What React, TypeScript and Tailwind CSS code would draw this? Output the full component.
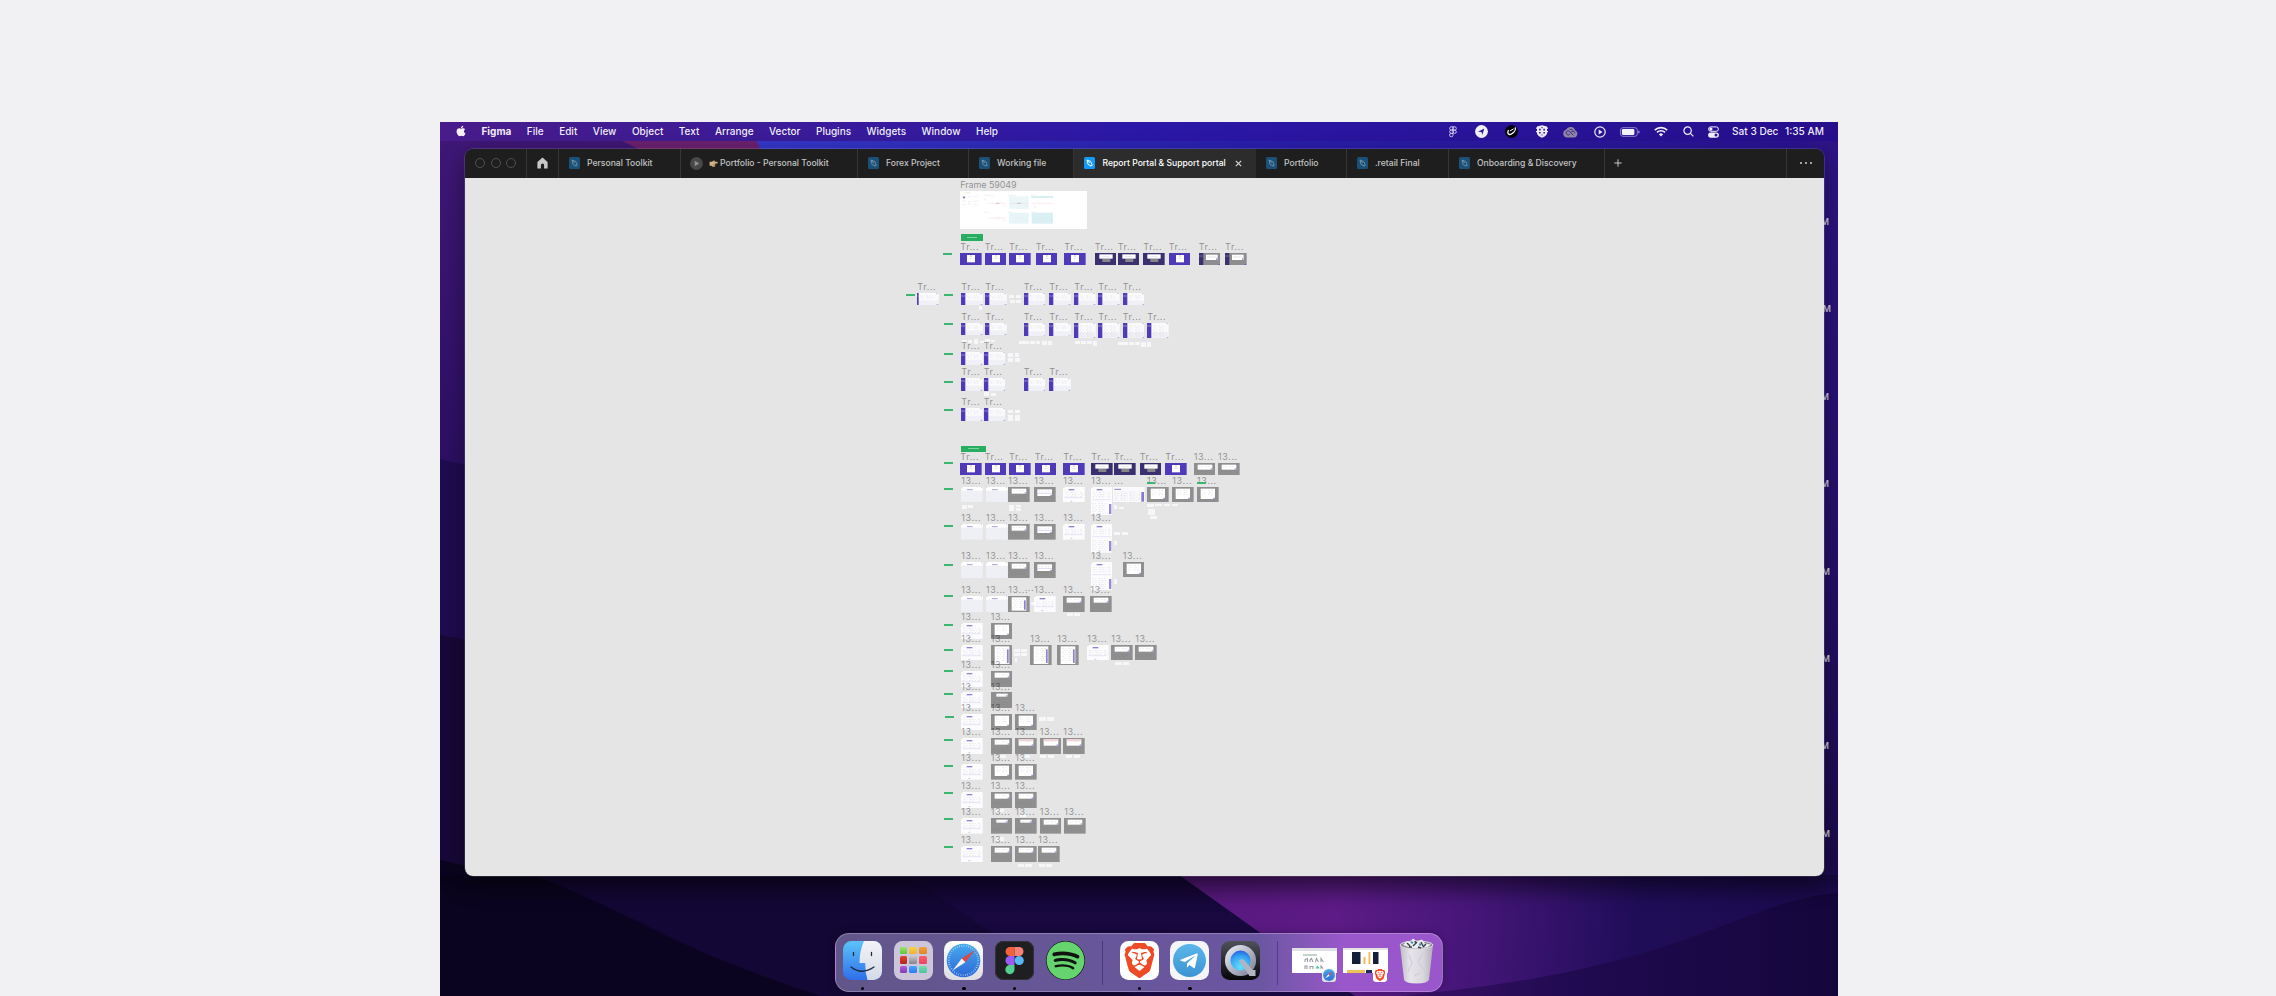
import React from "react";
import { FaApple, FaSpotify, FaTelegramPlane } from "react-icons/fa";
import { SiBrave } from "react-icons/si";

/* ---------- Wallpaper ---------- */

function Wallpaper() {
  return (
    <svg className="absolute inset-0" width="1398" height="874" viewBox="0 0 1398 874">
      <defs>
        <linearGradient id="wpBase" x1="0" y1="0" x2="0" y2="1">
          <stop offset="0" stopColor="#401878" />
          <stop offset=".3" stopColor="#32116a" />
          <stop offset=".55" stopColor="#230c58" />
          <stop offset="1" stopColor="#12062f" />
        </linearGradient>
        <linearGradient id="wpTop" x1="0" y1="0" x2="1" y2="0">
          <stop offset="0" stopColor="#3538cc" />
          <stop offset=".45" stopColor="#2a1fb0" />
          <stop offset="1" stopColor="#2a1290" />
        </linearGradient>
        <linearGradient id="wpRight" x1="0" y1="0" x2="0" y2="1">
          <stop offset="0" stopColor="#2e1488" />
          <stop offset=".5" stopColor="#25106a" />
          <stop offset=".85" stopColor="#1d0b4c" />
          <stop offset="1" stopColor="#1b0a55" />
        </linearGradient>
        <linearGradient id="wpPurple" gradientUnits="userSpaceOnUse" x1="735" y1="0" x2="1398" y2="60">
          <stop offset="0" stopColor="#541779" />
          <stop offset=".35" stopColor="#5c1b86" />
          <stop offset=".52" stopColor="#4a177c" />
          <stop offset=".66" stopColor="#35126b" />
          <stop offset=".8" stopColor="#1f0d58" />
          <stop offset="1" stopColor="#1c0b50" />
        </linearGradient>
        <linearGradient id="wpMid" x1="0" y1="0" x2="0" y2="1">
          <stop offset="0" stopColor="#150739" />
          <stop offset="1" stopColor="#1b0a47" />
        </linearGradient>
        <linearGradient id="wpCorner" gradientUnits="userSpaceOnUse" x1="960" y1="0" x2="1398" y2="0">
          <stop offset="0" stopColor="#3a1168" />
          <stop offset=".4" stopColor="#200a50" />
          <stop offset="1" stopColor="#14063c" />
        </linearGradient>
        <linearGradient id="wpShade" x1="0" y1="0" x2="0" y2="1">
          <stop offset="0" stopColor="#000" stopOpacity=".25" />
          <stop offset="1" stopColor="#000" stopOpacity="0" />
        </linearGradient>
      </defs>
      <rect width="1398" height="874" fill="url(#wpBase)" />
      <path d="M0 337 L60 352 V874 H0Z" fill="#1f0b50" />
      <path d="M0 513 L60 524 V874 H0Z" fill="#170838" />
      <path d="M180 18 L205 30 H335 L318 18Z" fill="#6c2170" />
      <path d="M316 18 L336 60 H1398 V18Z" fill="url(#wpTop)" />
      <path d="M1370 18 H1398 V874 H1370Z" fill="url(#wpRight)" />
      <path d="M0 738 L60 752 H1370 V874 H0Z" fill="#0b0420" />
      <path d="M85 750 Q150 775 215 808 T380 874 H800 V750Z" fill="#130735" />
      <path d="M470 754 L535 800 Q610 850 700 874 H1398 V750H465Z" fill="url(#wpMid)" />
      <path d="M735 750 L819 810 L915 874 H1398 V750Z" fill="url(#wpPurple)" />
      <path d="M1398 771 C1350 775 1310 794 1260 812 C1160 850 1060 864 960 874 H1398Z" fill="url(#wpCorner)" />
      <rect y="753" width="1398" height="30" fill="url(#wpShade)" />
    </svg>
  );
}

/* ---------- Menu bar ---------- */

const menus = ["File", "Edit", "View", "Object", "Text", "Arrange", "Vector", "Plugins", "Widgets", "Window", "Help"];

function MenuBar() {
  return (
    <div className="relative flex h-[19px] items-center bg-gradient-to-r from-[#491b8b] via-[#2b18a8] to-[#270f8c] pl-[14.5px] pr-[14px] text-[10.1px] leading-none text-white/95">
      <FaApple className="mb-[1px] size-[12px]" />
      <div className="-mt-px ml-[15px] flex items-center gap-[15.500px] text-[10px] font-medium">
        <span className="font-bold">Figma</span>
        {menus.map((m) => (
          <span key={m}>{m}</span>
        ))}
      </div>
      <div className="ml-auto flex items-center">
        <svg className="mr-[18px]" width="8" height="12" viewBox="0 0 8 12" fill="none" stroke="#d9d2f2" strokeWidth=".9">
          <path d="M4 .8H2.300a1.600 1.600 0 0 0 0 3.300H4zM4 .8h1.700a1.600 1.600 0 0 1 0 3.300H4zM4 4.100H2.300a1.600 1.600 0 0 0 0 3.300H4zM4 7.400H2.300A1.700 1.700 0 1 0 4 9.200z" />
          <circle cx="5.700" cy="5.800" r="1.600" />
        </svg>
        <svg className="mr-[17px]" width="13" height="13" viewBox="0 0 13 13">
          <circle cx="6.500" cy="6.500" r="6.400" fill="#f3f1fb" />
          <path d="M3 6.800 9.300 3.500 7.300 10 6.500 7.100Z" fill="#2a1a96" />
        </svg>
        <svg className="mr-[18px]" width="13" height="13" viewBox="0 0 13 13">
          <circle cx="6.500" cy="6.500" r="6.400" fill="#050308" />
          <path d="M3.300 5.500C1.800 9 4 10.300 6.600 8.900 9.200 7.400 10.800 4.600 10.300 2.900" stroke="#fff" strokeWidth="1.300" fill="none" strokeLinecap="round" />
          <path d="M5.200 5.800 8.300 4" stroke="#fff" strokeWidth="1" strokeLinecap="round" />
        </svg>
        <svg className="mr-[15px]" width="12" height="13" viewBox="0 0 12 13">
          <path d="M1 1.500 6 .2 11 1.500V8.500Q10 11.500 6 12.800 2 11.500 1 8.500Z" fill="#eeebfa" />
          <path d="M0 2.500h1v1.200H0zM11 2.500h1v1.200h-1zM0 6h1v1.200H0zM11 6h1v1.200h-1z" fill="#eeebfa" />
          <path d="M3 3.800h1.700v1.600H3zM7.300 3.800H9v1.600H7.300zM3 7h1.700v1.600H3zM7.300 7H9v1.600H7.300zM5.400 2h1.200v1.200H5.400zM5.400 9.400h1.200v1.200H5.400z" fill="#3a2a9c" />
        </svg>
        <svg className="mr-[16px]" width="15" height="12" viewBox="0 0 15 12">
          <path d="M4 11.500A4 4 0 0 1 3 3.700 5 5 0 0 1 12.300 4.500a3.700 3.700 0 0 1-1.300 7Z" fill="#9288a6" />
          <path d="M10.500 9.400 6.300 5.300a1.900 1.900 0 1 0-2.500 3c1 .9 2.300.7 3.200-.3M6.500 3.500q2.600-1.200 4 1.500M8 6.200c1.500-1.500 4-.6 4 1.100" stroke="#35228e" strokeWidth=".9" fill="none" />
        </svg>
        <svg className="mr-[14px]" width="12" height="12" viewBox="0 0 12 12">
          <circle cx="6" cy="6" r="5.200" fill="none" stroke="#f1eefb" strokeWidth="1.200" />
          <path d="M4.700 3.600v4.800L8.500 6Z" fill="#f1eefb" />
        </svg>
        <svg className="mr-[14px]" width="20" height="10" viewBox="0 0 20 10">
          <rect x=".5" y=".7" width="16.800" height="8.600" rx="2.400" fill="none" stroke="#8d82cd" />
          <rect x="1.900" y="2.100" width="12.500" height="5.800" rx="1.200" fill="#f4f2fc" />
          <path d="M18.300 3.400q1.400.4 1.400 1.600t-1.400 1.600Z" fill="#a79ddb" />
        </svg>
        <svg className="mr-[15px]" width="14" height="11" viewBox="0 0 14 11" fill="none" stroke="#f4f2fc" strokeWidth="1.600">
          <path d="M.8 4.100a8.900 8.900 0 0 1 12.400 0M3 6.400a5.700 5.700 0 0 1 8 0" />
          <path d="M7 10.600 4.900 8.400a3 3 0 0 1 4.200 0Z" fill="#f4f2fc" stroke="none" />
        </svg>
        <svg className="mr-[14px]" width="11" height="11" viewBox="0 0 11 11" fill="none" stroke="#f4f2fc" strokeWidth="1.200">
          <circle cx="4.600" cy="4.600" r="3.700" />
          <path d="m7.400 7.400 3 3" />
        </svg>
        <svg className="mr-[13px]" width="11" height="12" viewBox="0 0 11 12">
          <rect x=".6" y=".9" width="9.800" height="4.400" rx="2.200" fill="none" stroke="#f4f2fc" />
          <circle cx="2.900" cy="3.100" r="1.600" fill="#f4f2fc" />
          <rect x=".1" y="6.500" width="10.800" height="5.200" rx="2.600" fill="#f4f2fc" />
          <circle cx="8" cy="9.100" r="1.500" fill="#2a1590" />
        </svg>
        <span className="-mt-px w-[53px] whitespace-nowrap font-medium">Sat 3 Dec</span>
        <span className="-mt-px w-[39px] whitespace-nowrap font-medium">1:35 AM</span>
      </div>
    </div>
  );
}

/* ---------- Tab bar ---------- */

function FileIcon({ active = false }: { active?: boolean }) {
  return (
    <svg className="shrink-0" width="11" height="12" viewBox="0 0 11 12">
      <rect width="11" height="12" rx="1.500" fill={active ? "#1398fb" : "#1b5078"} />
      <g fill="none" stroke={active ? "#fff" : "#6f93ab"} strokeWidth=".9">
        <path d="M3 3l1 4.500 3 1.300L8 7.800 6.800 4.500Z" />
        <path d="M3 3l2.700 3M7 9.500l1.700-1.700" />
      </g>
    </svg>
  );
}

function PlayIcon() {
  return (
    <svg className="shrink-0" width="13" height="13" viewBox="0 0 13 13">
      <circle cx="6.500" cy="6.500" r="6.400" fill="#484848" />
      <path d="M4.700 3.800v5.400L9.300 6.500Z" fill="#909090" />
    </svg>
  );
}

function PointingHand() {
  return (
    <svg className="shrink-0" width="9" height="7" viewBox="0 0 10 8">
      <path d="M9.800 3Q10 2 8.800 2H6L6.500.9Q6.400.2 5.500.6L3 2H.5v4.500h2L4 7.700h2.200Q7 7.300 6.700 6.600 7.300 6 6.900 5.400 7.400 4.800 7 4h2Q9.700 4 9.800 3Z" fill="#d3b083" />
      <path d="M6.700 5.300H4.300M6.500 6.500h-2" stroke="#7d6248" strokeWidth=".5" />
    </svg>
  );
}

function Tab({ label, width }: { label: string; width: string }) {
  return (
    <div className={`flex h-full shrink-0 items-center gap-[7px] border-r border-[#363636] pl-[10px] text-[#c4c4c4] ${width}`}>
      <FileIcon />
      <span className="whitespace-nowrap">{label}</span>
    </div>
  );
}

function TabBar() {
  return (
    <div className="flex h-[29.500px] shrink-0 items-center bg-[#1e1e1e] text-[8.600px] font-medium leading-none">
      <div className="flex h-full w-[62px] shrink-0 items-center gap-[5.500px] border-r border-[#363636] pl-[10px]">
        <span className="size-[10px] rounded-full border border-[#505050]" />
        <span className="size-[10px] rounded-full border border-[#505050]" />
        <span className="size-[10px] rounded-full border border-[#505050]" />
      </div>
      <div className="flex h-full w-[32px] shrink-0 items-center justify-center border-r border-[#363636]">
        <svg width="11" height="12" viewBox="0 0 11 12">
          <path d="M5.500.6 10.600 5v6.400H7.100V8.200a1.600 1.600 0 0 0-3.200 0v3.200H.4V5Z" fill="#c8c8c8" />
        </svg>
      </div>
      <Tab label="Personal Toolkit" width="w-[122px]" />
      <div className="flex h-full w-[177px] shrink-0 items-center border-r border-[#363636] pl-[9px] text-[#c4c4c4]">
        <PlayIcon />
        <span className="ml-[6px] flex items-center gap-[2px]">
          <PointingHand />
          <span className="whitespace-nowrap">Portfolio - Personal Toolkit</span>
        </span>
      </div>
      <Tab label="Forex Project" width="w-[111px]" />
      <Tab label="Working file" width="w-[105px]" />
      <div className="flex h-full w-[182px] shrink-0 items-center gap-[7.500px] bg-[#2c2c2c] pl-[10px] text-white">
        <FileIcon active />
        <span className="whitespace-nowrap">Report Portal &amp; Support portal</span>
        <svg className="ml-[2px]" width="7" height="7" viewBox="0 0 7 7" stroke="#d8d8d8" strokeWidth="1.100">
          <path d="M.8.8l5.400 5.400M6.200.8.800 6.200" />
        </svg>
      </div>
      <Tab label="Portfolio" width="w-[91px]" />
      <Tab label=".retail Final" width="w-[102px]" />
      <Tab label="Onboarding & Discovery" width="w-[156px]" />
      <svg className="ml-[9px]" width="8" height="8" viewBox="0 0 8 8" stroke="#c8c8c8" strokeWidth="1">
        <path d="M4 .3v7.400M.3 4h7.400" />
      </svg>
      <div className="ml-auto flex h-full w-[38px] items-center justify-center gap-[3px] border-l border-[#363636]">
        <span className="size-[2px] rounded-full bg-[#d0d0d0]" />
        <span className="size-[2px] rounded-full bg-[#d0d0d0]" />
        <span className="size-[2px] rounded-full bg-[#d0d0d0]" />
      </div>
    </div>
  );
}

/* ---------- Canvas ---------- */

type Kind =
  | "login" | "dark" | "side" | "app" | "thin" | "blank" | "page" | "tall"
  | "table" | "top" | "lined" | "small" | "pink" | "big" | "grid";

type Item = [kind: Kind, x: number, w?: number, h?: number];
type Row = { y: number; h: number; prefix: string; items: Item[] };
type Box = [x: number, y: number, w: number, h: number];
type Section = { y: number; rows: Row[]; markers: Box[]; chips: Box[] };

// Canvas units are a third of a screen pixel at this zoom level.
const ZOOM = 1 / 3;
const ORIGIN_X = 1306;

const sections: Section[] = [
  {
    y: -9,
    rows: [
      { y: 234, h: 37, prefix: "Tr...", items: [["login", 180], ["login", 253], ["login", 326], ["login", 406], ["login", 492], ["dark", 583], ["dark", 652], ["dark", 729], ["login", 805], ["side", 895], ["side", 974]] },
      { y: 354, h: 37, prefix: "Tr...", items: [["thin", 51], ["app", 183], ["app", 255], ["app", 370], ["app", 447], ["app", 522], ["app", 594], ["app", 667]] },
      { y: 443, h: 37, prefix: "Tr...", items: [["app", 183], ["app", 255], ["app", 370, 65, 41], ["app", 447, 65, 41], ["app", 522, 65, 46], ["app", 594, 65, 46], ["app", 667, 65, 46], ["app", 741, 65, 46]] },
      { y: 531, h: 39, prefix: "Tr...", items: [["app", 183], ["app", 250]] },
      { y: 609, h: 39, prefix: "Tr...", items: [["app", 183], ["app", 250], ["app", 370], ["app", 447]] },
      { y: 699, h: 39, prefix: "Tr...", items: [["app", 183], ["app", 250]] },
    ],
    markers: [[127, 234, 27, 6], [17, 357, 27, 6], [132, 357, 27, 6], [132, 444, 27, 6], [132, 533, 27, 6], [132, 617, 27, 6], [132, 702, 27, 6]],
    chips: [
      [327, 360, 15, 9], [346, 360, 15, 9], [329, 375, 14, 9], [348, 375, 13, 10], [237, 394, 9, 11],
      [185, 494, 14, 10], [202, 496, 14, 9], [220, 493, 14, 15], [238, 497, 14, 8], [254, 493, 14, 10], [271, 494, 14, 8],
      [355, 497, 15, 9], [372, 499, 15, 8], [390, 497, 14, 9], [407, 499, 13, 8], [424, 497, 15, 13], [442, 499, 14, 11],
      [525, 497, 15, 9], [542, 499, 14, 8], [560, 498, 14, 8], [578, 498, 13, 14],
      [652, 500, 15, 10], [669, 502, 15, 8], [686, 502, 15, 8], [703, 500, 15, 9], [722, 502, 14, 13], [739, 502, 13, 13],
      [324, 534, 15, 12], [343, 534, 14, 11], [323, 550, 16, 11], [343, 550, 15, 10], [252, 652, 15, 10], [271, 653, 15, 9],
      [324, 705, 14, 9], [344, 705, 14, 9], [322, 719, 17, 20], [344, 719, 14, 20],
    ],
  },
  {
    y: 756,
    rows: [
      { y: 98, h: 37, prefix: "Tr...", items: [["login", 180], ["login", 253], ["login", 326], ["login", 403], ["login", 489], ["dark", 573], ["dark", 641], ["dark", 718], ["login", 795]] },
      { y: 98, h: 37, prefix: "13...", items: [["top", 880], ["top", 953]] },
      { y: 170, h: 47, prefix: "13...", items: [["blank", 183], ["blank", 257], ["top", 324], ["lined", 402], ["page", 489], ["tall", 573, 63, 86], ["big", 740], ["big", 816], ["big", 890]] },
      { y: 282, h: 47, prefix: "13...", items: [["blank", 183], ["blank", 257], ["top", 324], ["lined", 402], ["page", 489], ["tall", 573, 63, 86]] },
      { y: 396, h: 48, prefix: "13...", items: [["blank", 183], ["blank", 257], ["top", 324], ["lined", 402], ["tall", 573, 63, 84], ["big", 667, 65, 45]] },
      { y: 497, h: 48, prefix: "13...", items: [["blank", 183], ["blank", 257], ["grid", 324], ["page", 402], ["top", 489], ["top", 570]] },
      { y: 579, h: 48, prefix: "13...", items: [["page", 183], ["big", 271]] },
      { y: 644, h: 47, prefix: "13...", items: [["page", 183], ["grid", 271, 65, 61], ["grid", 390, 65, 61], ["grid", 471, 65, 61], ["page", 561], ["top", 633], ["top", 705]] },
    ],
    markers: [[132, 96, 27, 6], [132, 174, 27, 6], [132, 285, 27, 6], [132, 403, 27, 6], [132, 496, 27, 6], [132, 582, 27, 6], [132, 657, 27, 6], [741, 155, 24, 6], [891, 155, 25, 6]],
    chips: [
      [184, 225, 15, 11], [204, 224, 13, 10], [325, 225, 15, 17], [348, 225, 15, 7], [348, 234, 15, 9], [642, 225, 9, 13], [656, 232, 16, 5],
      [741, 221, 19, 9], [765, 221, 20, 8], [791, 222, 19, 7], [814, 221, 19, 7], [742, 237, 22, 19], [750, 259, 20, 7],
      [642, 307, 18, 8], [664, 307, 18, 8], [642, 332, 9, 14], [642, 447, 9, 14], [393, 515, 9, 11],
      [499, 548, 18, 9], [521, 548, 18, 9], [341, 657, 18, 8], [363, 657, 18, 8], [341, 669, 18, 8], [363, 669, 18, 8], [343, 683, 8, 12],
    ],
  },
  {
    y: 1416,
    rows: [
      { y: 62, h: 48, prefix: "13...", items: [["page", 183], ["top", 271]] },
      { y: 127, h: 48, prefix: "13...", items: [["page", 183], ["small", 271]] },
      { y: 192, h: 48, prefix: "13...", items: [["page", 183], ["big", 271], ["big", 345]] },
      { y: 263, h: 48, prefix: "13...", items: [["page", 183], ["top", 271], ["pink", 345], ["pink", 418], ["pink", 489]] },
      { y: 342, h: 47, prefix: "13...", items: [["page", 183], ["big", 271], ["big", 345]] },
      { y: 425, h: 48, prefix: "13...", items: [["page", 183], ["top", 271], ["top", 345]] },
      { y: 504, h: 47, prefix: "13...", items: [["page", 183], ["small", 271], ["small", 345], ["top", 418], ["top", 492]] },
      { y: 588, h: 48, prefix: "13...", items: [["page", 183], ["top", 271], ["top", 345], ["top", 414]] },
    ],
    markers: [[132, 61, 27, 6], [132, 129, 27, 6], [134, 197, 28, 6], [132, 267, 27, 6], [132, 346, 27, 6], [132, 425, 27, 6], [132, 505, 27, 6], [132, 588, 27, 6]],
    chips: [
      [645, 35, 19, 9], [667, 35, 19, 9], [417, 202, 20, 12], [441, 202, 19, 12], [419, 314, 19, 9], [442, 314, 19, 9], [498, 315, 18, 9], [521, 315, 19, 9],
      [298, 314, 20, 9], [368, 314, 20, 9], [286, 478, 24, 9], [358, 492, 18, 8], [286, 562, 25, 10],
      [354, 641, 18, 9], [375, 641, 20, 9], [416, 641, 18, 9], [438, 641, 18, 9],
    ],
  },
];

function Scribble({ x, y, w, rows, gap }: { x: number; y: number; w: number; rows: number; gap: number }) {
  return (
    <g stroke="#c9c9d4" strokeWidth="1.400" strokeDasharray="4 5 2 7 5 4">
      {Array.from({ length: rows }, (_, i) => (
        <path key={i} d={`M${x + (i % 2) * 3} ${y + i * gap}h${w - (i % 2) * 3}`} />
      ))}
    </g>
  );
}

function Art({ kind, w, h }: { kind: Kind; w: number; h: number }) {
  switch (kind) {
    case "login":
      return (
        <>
          <rect width={w} height={h} fill="#4f3ab9" />
          <rect x="21" y="6" width="24" height="22" fill="#fff" />
          <path d="M31 9h4" stroke="#e58a94" strokeWidth="3" />
          <path d="M29 16h8" stroke="#d3cde9" strokeWidth="2" />
        </>
      );
    case "dark":
      return (
        <>
          <rect width={w} height={h} fill="#3a3070" />
          <rect x="22" y="17" width="24" height="10" fill="#84848a" />
          <rect x="13" y="4" width="40" height="13" fill="#fff" />
          <path d="M20 11h24" stroke="#d3d0e2" strokeWidth="1.500" />
        </>
      );
    case "side":
      return (
        <>
          <rect width={w} height={h} fill="#8d8d90" />
          <rect width="13" height={h} fill="#3c3170" />
          <path d="M0 9h13" stroke="#8d8d90" strokeWidth="2" />
          <rect x="21" y="5" width="35" height="16" fill="#fff" />
          <path d="M24 12h26" stroke="#c6c6c9" strokeWidth="1.500" />
          <path d="M51 18h4M59 35h4" stroke="#5b48c0" strokeWidth="3" />
        </>
      );
    case "thin":
    case "app": {
      const bar = kind === "thin" ? 5 : 13;
      return (
        <>
          <rect width={w} height={h} fill="#fbfbfd" />
          <rect x={bar} y={h * 0.6} width={w - bar} height={h * 0.4} fill="#f0f1f6" />
          <rect width={bar} height={h} fill="#4f3ab9" />
          <path d={`M0 9h${bar}`} stroke="#b3aadb" strokeWidth="2" />
          <Scribble x={bar + 5} y={9} w={w - bar - 12} rows={h > 42 ? 6 : 2} gap={6} />
          <path d={`M${w - 6} ${h - 2}h5`} stroke="#a59adb" strokeWidth="3" />
          <path d="M58 2h4" stroke="#999" strokeWidth="2" />
        </>
      );
    }
    case "blank":
      return (
        <>
          <rect width={w} height={h} fill="#eff0f5" />
          <rect width={w} height="11" fill="#fff" />
          <path d="M18 8h17" stroke="#a9a3d6" strokeWidth="3" />
          <path d="M1 2h3M60 2h3" stroke="#cf9da6" strokeWidth="2" />
        </>
      );
    case "page":
    case "tall":
      return (
        <>
          <rect width={w} height={h} fill="#fcfcfe" />
          <path d="M17 8h17" stroke="#8f85d6" strokeWidth="4" />
          <Scribble x={6} y={17} w={w - 12} rows={3} gap={6} />
          <path d={`M4 ${h > 60 ? 38 : 32}h56`} stroke="#dddaf3" strokeWidth="2" />
          <path d={`M1 2h3M22 ${h - 4}h6`} stroke="#b7b3c4" strokeWidth="2" />
          {kind === "tall" && (
            <>
              <Scribble x={4} y={50} w={46} rows={6} gap={6} />
              <rect x="54" y="51" width="7" height="30" fill="#958bdc" />
            </>
          )}
        </>
      );
    case "table":
      return (
        <>
          <rect width={w} height={h} fill="#fbfbfd" />
          <path d="M4 7h20" stroke="#8f85d6" strokeWidth="3" />
          <Scribble x={4} y={15} w={76} rows={6} gap={5} />
          <rect x={w - 10} y="15" width="8" height={h - 17} fill="#8479d6" />
        </>
      );
    default:
      break;
  }
  const dialog: Record<string, Box> = {
    top: [11, 5, 44, 15],
    lined: [10, 7, 44, 20],
    small: [16, 5, 34, 9],
    pink: [11, 4, 44, 19],
    big: [11, 5, 43, 31],
    grid: [11, 4, 44, h - 8],
  };
  const [dx, dy, dw, dh] = dialog[kind];
  return (
    <>
      <rect width={w} height={h} fill="#8f8f90" />
      <path d={`M10 ${h - 12}h40M6 ${h - 17}h48`} stroke="#83838a" strokeWidth="1.500" strokeDasharray="5 8" />
      <rect x={dx} y={dy} width={dw} height={dh} fill="#fff" />
      {kind === "pink" && <path d={`M${dx} ${dy + 3}h${dw}`} stroke="#f6d2d7" strokeWidth="5" />}
      {kind === "lined" && <path d={`M${dx} ${dy + 12}h${dw}`} stroke="#b7b0e4" strokeWidth="1.500" />}
      <Scribble x={dx + 5} y={dy + 6} w={dw - 12} rows={kind === "grid" ? Math.floor(dh / 6) - 1 : kind === "big" ? 3 : 1} gap={6} />
      {kind === "grid" ? (
        <rect x="48" y="13" width="5" height={h - 20} fill="#8a80d6" />
      ) : (
        <path d={`M${dx + dw - 5} ${dy + dh - 2}h5`} stroke="#8378d2" strokeWidth="3" />
      )}
    </>
  );
}

function place(sy: number, [x, y, w, h]: Box): React.CSSProperties {
  return { left: (ORIGIN_X + x) * ZOOM, top: (sy + y) * ZOOM, width: w * ZOOM, height: h * ZOOM };
}

function Label({ sy, x, y, text, track = "tracking-[0.6px]" }: { sy: number; x: number; y: number; text: string; track?: string }) {
  return (
    <span
      className={`absolute whitespace-nowrap text-[9px] leading-[9px] text-black/40 ${track}`}
      style={{ left: (ORIGIN_X + x) * ZOOM, top: (sy + y - 32) * ZOOM }}
    >
      {text}
    </span>
  );
}

function Thumb({ sy, kind, box }: { sy: number; kind: Kind; box: Box }) {
  return (
    <div className="absolute" style={place(sy, box)}>
      <svg className="block size-full" viewBox={`0 0 ${box[2]} ${box[3]}`} preserveAspectRatio="none">
        <Art kind={kind} w={box[2]} h={box[3]} />
      </svg>
    </div>
  );
}

function CoverFrame() {
  return (
    <div className="absolute bg-white" style={place(-9, [180, 48, 381, 113])}>
      <svg className="block size-full" viewBox="0 0 381 113">
        <rect x="147" y="16" width="59" height="38" fill="#eaf6f8" />
        <rect x="214" y="15" width="65" height="6" fill="#d9f0f3" />
        <rect x="147" y="65" width="59" height="33" fill="#e8f5f8" />
        <rect x="215" y="65" width="64" height="33" fill="#d9eff4" />
        <g stroke="#d3d3d8" strokeWidth="1.300" strokeDasharray="5 3">
          <path d="M73 13h28M142 13h28M213 13h14M73 64h12M144 64h14M214 64h16M73 25h8" />
          <path d="M6 17h12M24 17h10M42 17h12M6 30h12M24 32h10M42 30h12M6 40h12M24 38h10M42 40h12" />
          <path d="M108 81h10M172 81h10M243 81h8M130 44h6M198 44h8M130 87h6M198 87h8M271 87h8M222 50h6" />
        </g>
        <path d="M86 37h50M150 37h54M215 37h64M86 81h50" stroke="#f2cdd3" strokeWidth="1.200" />
        <path d="M12 6h20M8 18h4" stroke="#e0b3b3" strokeWidth="1.500" strokeDasharray="3 2" />
        <rect x="9" y="17" width="6" height="5" fill="#7b73d2" />
        <path d="M108 37h10M172 37h10" stroke="#b8a5ab" strokeWidth="2" />
      </svg>
    </div>
  );
}

function Canvas() {
  return (
    <div className="relative grow overflow-hidden bg-[#e5e5e5]">
      <CoverFrame />
      <Label sy={-9} x={180} y={48} text="Frame 59049" track="tracking-[-0.1px]" />
      <div className="absolute flex items-center justify-center bg-[#27ae60]" style={place(-9, [183, 177, 66, 20])}>
        <span className="h-px w-[10px] bg-[#7fd3a2]" />
      </div>
      <div className="absolute flex items-center justify-center bg-[#27ae60]" style={place(756, [183, 47, 75, 19])}>
        <span className="h-px w-[11px] bg-[#7fd3a2]" />
      </div>
      {sections.map((s) => (
        <React.Fragment key={s.y}>
          {s.chips.map((c, i) => (
            <div key={i} className="absolute bg-[#f7f7f9]" style={place(s.y, c)} />
          ))}
          {s.rows.map((r) =>
            r.items.map(([kind, x, w = 65, h = r.h]) => <Thumb key={`${r.y}-${x}`} sy={s.y} kind={kind} box={[x, r.y, w, h]} />)
          )}
        </React.Fragment>
      ))}
      <Thumb sy={756} kind="table" box={[639, 171, 95, 46]} />
      <Label sy={756} x={641} y={171} text="..." />
      <Label sy={756} x={373} y={490} text="..." />
      {sections.map((s) => (
        <React.Fragment key={s.y}>
          {s.rows.map((r) => r.items.map(([, x]) => <Label key={`${r.y}-${x}`} sy={s.y} x={x} y={r.y} text={r.prefix} />))}
          {s.markers.map((m, i) => (
            <div key={i} className="absolute bg-[#3cb571]" style={place(s.y, m)} />
          ))}
        </React.Fragment>
      ))}
    </div>
  );
}

/* ---------- Dock ---------- */

function FinderIcon() {
  return (
    <svg width="39" height="39" viewBox="0 0 39 39">
      <defs>
        <linearGradient id="finderBlue" x1="0" y1="0" x2="0" y2="1">
          <stop offset="0" stopColor="#5cc3f8" />
          <stop offset="1" stopColor="#2f6eea" />
        </linearGradient>
        <linearGradient id="finderWhite" x1="0" y1="0" x2="0" y2="1">
          <stop offset="0" stopColor="#f3f3f6" />
          <stop offset="1" stopColor="#d3dae8" />
        </linearGradient>
        <clipPath id="finderClip">
          <rect width="39" height="39" rx="8.500" />
        </clipPath>
      </defs>
      <g clipPath="url(#finderClip)">
        <rect width="39" height="39" fill="url(#finderBlue)" />
        <path d="M21 0Q16.500 10 16.500 22h5.700Q22 31 24.500 39H39V0Z" fill="url(#finderWhite)" />
      </g>
      <g fill="none" stroke="#1d2a3c" strokeLinecap="round" strokeWidth="1.300">
        <path d="M10.500 11.500v3M28.500 11.500v3M8 26Q18.500 34.500 31 26" />
      </g>
    </svg>
  );
}

const launchTiles = [
  "from-[#9be36a] to-[#5fc63e]", "from-[#f8d347] to-[#eeb136]", "from-[#f0a043] to-[#df8427]",
  "from-[#e0432f] to-[#b9221f]", "from-[#c4c6cb] to-[#83878d]", "from-[#f5606c] to-[#ea4460]",
  "from-[#b65bd6] to-[#8438b6]", "from-[#4aa3fb] to-[#2b7bf0]", "from-[#77d9a4] to-[#4cc5a4]",
];

function LaunchpadIcon() {
  return (
    <div className="grid size-[39px] grid-cols-3 place-content-center gap-[2px] rounded-[8.500px] bg-[#cbc6d9] p-[6px]">
      {launchTiles.map((t) => (
        <span key={t} className={`h-[7.500px] w-full rounded-[1.500px] bg-gradient-to-b ${t}`} />
      ))}
    </div>
  );
}

function SafariIcon({ size = 39 }: { size?: number }) {
  return (
    <svg width={size} height={size} viewBox="0 0 39 39">
      <defs>
        <linearGradient id="safariFace" x1="0" y1="0" x2="0" y2="1">
          <stop offset="0" stopColor="#47a9ee" />
          <stop offset="1" stopColor="#2c68d6" />
        </linearGradient>
        <linearGradient id="safariTile" x1="0" y1="0" x2="0" y2="1">
          <stop offset="0" stopColor="#fff" />
          <stop offset="1" stopColor="#dcdce2" />
        </linearGradient>
      </defs>
      <rect width="39" height="39" rx="8.500" fill="url(#safariTile)" />
      <circle cx="19.500" cy="19.500" r="16.800" fill="url(#safariFace)" />
      <circle cx="19.500" cy="19.500" r="14.700" fill="none" stroke="#b9dcf8" strokeWidth="2" strokeDasharray=".6 1.700" />
      <path d="M31 9 17.800 17.500l3.600 3.800Z" fill="#e5453c" />
      <path d="M8.500 29.500 17.800 17.500l3.600 3.800Z" fill="#f4f6fa" />
    </svg>
  );
}

function FigmaIcon() {
  return (
    <svg width="39" height="39" viewBox="0 0 39 39">
      <rect width="39" height="39" rx="8.500" fill="#1f1e21" />
      <rect x=".5" y=".5" width="38" height="38" rx="8" fill="none" stroke="#343238" />
      <path d="M19.500 6H15a4.500 4.500 0 0 0 0 9h4.500Z" fill="#f0633f" />
      <path d="M19.500 6H24a4.500 4.500 0 0 1 0 9h-4.500Z" fill="#f58274" />
      <path d="M19.500 15H15a4.500 4.500 0 0 0 0 9h4.500Z" fill="#9b5cf6" />
      <circle cx="24.200" cy="19.500" r="4.600" fill="#56b8f7" />
      <path d="M19.500 24H15a4.600 4.600 0 1 0 4.500 4.600Z" fill="#55cf91" />
    </svg>
  );
}

function BraveIcon({ size }: { size: "lg" | "sm" }) {
  return size === "lg" ? (
    <div className="flex size-[39px] items-center justify-center rounded-[8.500px] bg-white">
      <SiBrave className="size-[35px] text-[#ee4a26]" />
    </div>
  ) : (
    <div className="flex size-[14px] items-center justify-center rounded-[3px] bg-white">
      <SiBrave className="size-[12px] text-[#ee4a26]" />
    </div>
  );
}

function QuickTimeIcon() {
  return (
    <svg width="39" height="39" viewBox="0 0 39 39">
      <defs>
        <linearGradient id="qtTile" x1="0" y1="0" x2="0" y2="1">
          <stop offset="0" stopColor="#50525a" />
          <stop offset="1" stopColor="#060608" />
        </linearGradient>
        <linearGradient id="qtRing" x1="0" y1="0" x2="1" y2="1">
          <stop offset="0" stopColor="#e4e8f2" />
          <stop offset="1" stopColor="#80849a" />
        </linearGradient>
        <radialGradient id="qtCore" cx=".5" cy=".75" r=".7">
          <stop offset="0" stopColor="#63e0fb" />
          <stop offset=".6" stopColor="#35a5f4" />
          <stop offset="1" stopColor="#2350d8" />
        </radialGradient>
      </defs>
      <rect width="39" height="39" rx="8.500" fill="url(#qtTile)" />
      <circle cx="19.500" cy="19.500" r="12.800" fill="url(#qtCore)" stroke="url(#qtRing)" strokeWidth="5.500" />
      <path d="M18 19.500q2.500-3 5.500 0l8 9.500h3v6h-6Z" fill="#b2b5c1" />
    </svg>
  );
}

function TrashIcon() {
  return (
    <svg width="35" height="46" viewBox="0 0 35 46">
      <defs>
        <linearGradient id="binBody" x1="0" y1="0" x2="1" y2="0">
          <stop offset="0" stopColor="#bfbcc5" />
          <stop offset=".3" stopColor="#e6e5e9" />
          <stop offset=".7" stopColor="#d9d7dd" />
          <stop offset="1" stopColor="#b3afba" />
        </linearGradient>
      </defs>
      <path d="M1 7 5 41.500Q6 45.500 17.500 45.500T30 41.500L34 7Z" fill="url(#binBody)" />
      <ellipse cx="17.500" cy="7" rx="16.500" ry="4" fill="#8f8c96" stroke="#dcdbe0" />
      <path d="m4 7 4-4 3 1 3-3.500 4 3 5-2 3 4 6 1-4 3-6 0-5 1-6-1Z" fill="#eeeef1" />
      <path d="m8 5 3 3M14 8l4-4M22 4l2 4M27 6l-3 3M10 9h3M19 9l3 1M16 3l1 3" stroke="#3c4450" strokeWidth="1.500" />
      <path d="m20 6 2 1M14 5l-2-1" stroke="#4397b5" strokeWidth="2" />
      <path d="m10 17 3 8-4 9M24 15l-5 9 6 8M15 38l6-3" stroke="#d0ced5" strokeWidth="1.200" fill="none" />
    </svg>
  );
}

function DocsPreview() {
  return (
    <div className="relative h-[25px] w-[45px] bg-white">
      <svg width="45" height="25" viewBox="0 0 45 25">
        <path d="M0 1.500h45" stroke="#dedee4" strokeWidth="3" />
        <path d="M11 7h14" stroke="#a9c2b5" strokeWidth="1.400" />
        <g fill="none" stroke="#9a9da6" strokeWidth="1.100">
          <path d="M13 14v-2.500l2.500-1V14M18 14v-2l1.500-1.500L21 14M23.500 14l1-3.500 2 3.500M29 14v-3.500l2.500 3.500M13 21v-3h2v3M18 21v-2.500h3V21M29 21v-3l2.500 3" />
        </g>
        <path d="M23.500 20.500 25.500 17.500l2 3Z" fill="#3fc8a0" />
      </svg>
      <span className="absolute -bottom-[9px] right-[1px]">
        <SafariIcon size={14} />
      </span>
    </div>
  );
}

function ShotPreview() {
  return (
    <div className="relative h-[25px] w-[45px] bg-white">
      <svg width="45" height="25" viewBox="0 0 45 25">
        <path d="M0 1h45" stroke="#e2e2e0" strokeWidth="2" />
        <path d="M9 4h8.500v12H9zM30 4h5.500v12H30z" fill="#14203a" />
        <path d="M20.500 9h2v7h-2zM25.500 4h1.800v12h-1.800z" fill="#eebb58" />
        <path d="M4 22h18v3H4z" fill="#efc25a" />
        <path d="M23 22h6v3h-6z" fill="#1b2c5c" />
      </svg>
      <span className="absolute -bottom-[9px] right-[1px]">
        <BraveIcon size="sm" />
      </span>
    </div>
  );
}

function DockItem({ children, running = false }: { children: React.ReactNode; running?: boolean }) {
  return (
    <div className="flex flex-col items-center">
      {children}
      <span className={`mt-[7px] size-[3.500px] rounded-full ${running ? "bg-black" : ""}`} />
    </div>
  );
}

function Dock() {
  return (
    <div className="relative ml-[395px] flex h-[59px] w-[608px] items-start rounded-[14px] border border-white/25 bg-gradient-to-r from-[#61568a] from-0% via-[#6b56a2] via-70% to-[#9a57cb] to-84% pl-[7px] pt-[7px] shadow-[0_0_8px_rgba(0,0,0,0.25)]">
      <div className="flex gap-[11.700px]">
        <DockItem running><FinderIcon /></DockItem>
        <DockItem><LaunchpadIcon /></DockItem>
        <DockItem running><SafariIcon /></DockItem>
        <DockItem running><FigmaIcon /></DockItem>
        <DockItem>
          <div className="flex size-[39px] items-center justify-center rounded-full bg-[#101411]">
            <FaSpotify className="size-[39px] text-[#65d36e]" />
          </div>
        </DockItem>
      </div>
      <span className="ml-[17px] h-[44px] w-px bg-[#47377c]" />
      <div className="ml-[17px] flex gap-[11.700px]">
        <DockItem running><BraveIcon size="lg" /></DockItem>
        <DockItem running>
          <div className="flex size-[39px] items-center justify-center rounded-[8.500px] bg-[#f4f5f8]">
            <div className="flex size-[33px] items-center justify-center rounded-full bg-gradient-to-b from-[#5cb6ea] to-[#3b93d2]">
              <FaTelegramPlane className="mr-[2px] mt-[1px] size-[20px] text-white" />
            </div>
          </div>
        </DockItem>
        <DockItem><QuickTimeIcon /></DockItem>
      </div>
      <span className="ml-[17px] h-[44px] w-px bg-[#5a3a90]" />
      <div className="ml-[14px] flex gap-[6px] pt-[7px]">
        <DocsPreview />
        <ShotPreview />
      </div>
      <div className="-mt-[3px] ml-[11px]">
        <TrashIcon />
      </div>
    </div>
  );
}

/* ---------- Page ---------- */

const clockMarks = ["w-[5px]", "w-[7px]", "w-[5px]", "w-[5px]", "w-[6px]", "w-[6px]", "w-[5px]", "w-[6px]"];

export default function App() {
  return (
    <div className="h-[996px] w-[2276px] overflow-hidden bg-[#f1f1f4] pl-[440px] pt-[122px] font-['Inter',sans-serif]">
      <div className="relative flex h-[874px] w-[1398px] flex-col overflow-hidden">
        <Wallpaper />
        <MenuBar />
        <div className="absolute left-[1384px] top-[95px] flex flex-col gap-[78.400px] text-[9px] font-medium leading-[9px] text-white/85">
          {clockMarks.map((w, i) => (
            <span key={i} className={`flex justify-end ${w}`}>M</span>
          ))}
        </div>
        <div className="relative ml-[25px] mt-[7.500px] flex h-[727px] w-[1359px] shrink-0 flex-col overflow-hidden rounded-[8px] shadow-[0_0_0_0.500px_rgba(255,255,255,0.25),0_8px_24px_rgba(0,0,0,0.45)]">
          <TabBar />
          <Canvas />
        </div>
        <div className="mt-[57px]">
          <Dock />
        </div>
      </div>
    </div>
  );
}
